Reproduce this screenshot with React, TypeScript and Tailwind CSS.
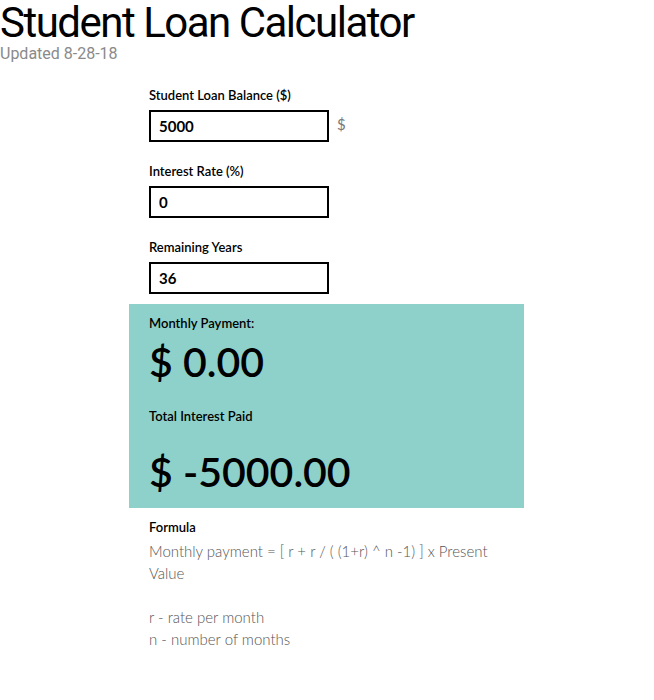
export default function App() {
  const body = { fontFamily: "Lato, 'Open Sans', sans-serif" };
  const din = { fontFamily: "Roboto, 'Liberation Sans', sans-serif" };
  return (
    <div className="min-h-screen bg-white text-black" style={body}>
      <header>
        <h1 className="text-[42px] leading-[46px] tracking-[-1.5px] font-normal" style={din}>
          Student Loan Calculator
        </h1>
        <p className="text-[16px] leading-[16px] text-[#8a8a8a]" style={din}>
          Updated 8-28-18
        </p>
      </header>

      <main className="ml-[129px] w-[395px] pt-[24px]">
        <div className="px-[20px] flex flex-col gap-[20px]">
          <Field label="Student Loan Balance ($)" value="5000" suffix="$" />
          <Field label="Interest Rate (%)" value="0" />
          <Field label="Remaining Years" value="36" />
        </div>

        {/* results */}
        <section className="mt-[10px] bg-[#8ed1ca] px-[20px] pt-[10px] pb-[14px]">
          <div className="text-[13px] font-semibold leading-[18px]">Monthly Payment:</div>
          <div className="mt-[8px] text-[41px] font-semibold leading-[44px]">$ 0.00</div>
          <div className="mt-[23px] text-[13px] font-semibold leading-[18px]">Total Interest Paid</div>
          <div className="mt-[25px] text-[41px] font-semibold leading-[44px]">$ -5000.00</div>
        </section>

        <section className="px-[20px] pt-[10px]">
          <div className="text-[13px] font-semibold leading-[18px]">Formula</div>
          <p className="mt-[4px] text-[15px] leading-[22px] text-[#555] font-light">
            Monthly payment = [ r + r / ( (1+r) ^ n -1) ] x Present Value
          </p>
          <p className="mt-[22px] text-[15px] leading-[22px] text-[#555] font-light">
            r - rate per month
            <br />
            n - number of months
          </p>
        </section>
      </main>
    </div>
  );
}

function Field({ label, value, suffix }: { label: string; value: string; suffix?: string }) {
  return (
    <div>
      <label className="block text-[13px] font-semibold leading-[18px]">{label}</label>
      <div className="mt-[6px] flex items-center gap-[8px]">
        <input
          defaultValue={value}
          className="h-[32px] w-[180px] border-2 border-black px-[8px] text-[15px] font-bold outline-none"
        />
        {suffix && <span className="text-[15px] text-[#777] -mt-[4px]">{suffix}</span>}
      </div>
    </div>
  );
}
